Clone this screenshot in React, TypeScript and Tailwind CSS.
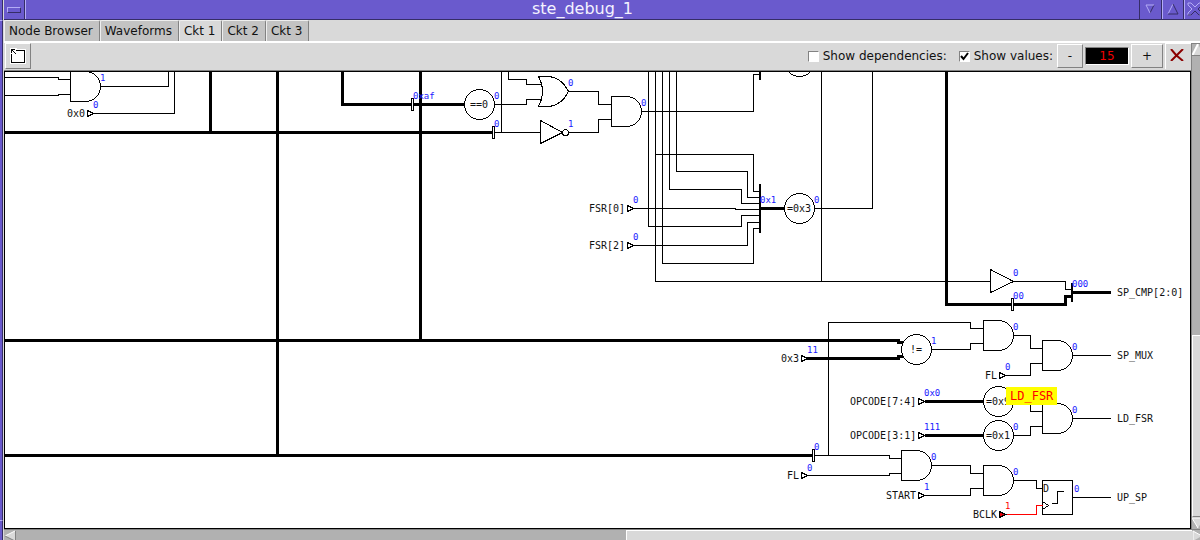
import React, { useState } from "react";

type Pt = { x: number; y: number };

const AndGate = ({ x, y }: Pt) => (
  <path
    d={`M${x} ${y}h15a15 15 0 0 1 0 30h-15z`}
    className="fill-white stroke-black"
  />
);

const Clip = ({ x, y }: Pt) => (
  <rect x={x} y={y - 6} width={2} height={12} className="fill-white stroke-black" />
);

const thin = [
  "M5 77H58V79H70",
  "M5 95H58V94H70",
  "M100 86H168V71",
  "M93 113H174V71",
  "M494 104H526V99H541",
  "M501 71V132",
  "M508 71V79H526V84H541",
  "M568 91H598V104H611",
  "M494 132H540",
  "M568 132H598V119H611",
  "M641 111H753V74H760",
  "M648 71V226H741V215H759",
  "M655 71V281H990",
  "M655 154H753V191H759",
  "M662 71V263H753V228H759",
  "M669 71V189H741V203H759",
  "M676 71V171H747V197H759",
  "M633 208H735V209H759",
  "M633 245H747V222H759",
  "M814 208H872V71",
  "M821 71V281",
  "M1013 281H1065V289H1071",
  "M828 455V322H970V328H983",
  "M931 349H970V343H983",
  "M1013 335H1030V348H1042",
  "M1005 375H1030V363H1042",
  "M1072 355H1110",
  "M1013 401H1030V411H1042",
  "M1013 435H1030V426H1042",
  "M1072 418H1110",
  "M814 455H889V458H901",
  "M807 475H889V473H901",
  "M931 465H970V473H983",
  "M924 495H970V488H983",
  "M1013 480H1036V488H1042",
  "M1072 497H1110",
];

const thick = [
  "M210 71V132",
  "M4 132H492",
  "M277 71V455",
  "M342 71V104H464",
  "M420 71V340",
  "M760 208H784",
  "M946 71V304H1065V296H1071",
  "M1072 292H1110",
  "M4 340H898V342H904",
  "M806 358H898V356H904",
  "M924 401H983",
  "M924 435H983",
  "M4 455H812",
];

const units: [number, number, string][] = [
  [479, 104, "==0"],
  [799, 208, "=0x3"],
  [916, 349, "!="],
  [998, 401, "=0x9"],
  [998, 435, "=0x1"],
];

const ports: [number, number, number, string][] = [
  [87, 113, 67, "0x0"],
  [627, 208, 589, "FSR[0]"],
  [627, 245, 589, "FSR[2]"],
  [801, 358, 781, "0x3"],
  [999, 375, 985, "FL"],
  [918, 401, 850, "OPCODE[7:4]"],
  [918, 435, 850, "OPCODE[3:1]"],
  [801, 475, 787, "FL"],
  [918, 495, 886, "START"],
  [999, 514, 973, "BCLK"],
];

const values: [number, number, string][] = [
  [100, 81, "1"],
  [93, 108, "0"],
  [413, 99, "0xaf"],
  [494, 99, "0"],
  [494, 127, "0"],
  [568, 86, "0"],
  [568, 127, "1"],
  [641, 106, "0"],
  [633, 203, "0"],
  [633, 240, "0"],
  [760, 203, "0x1"],
  [814, 203, "0"],
  [1013, 276, "0"],
  [1013, 299, "00"],
  [1072, 287, "000"],
  [807, 353, "11"],
  [931, 344, "1"],
  [1013, 330, "0"],
  [1072, 350, "0"],
  [1005, 370, "0"],
  [924, 396, "0x0"],
  [924, 430, "111"],
  [1013, 430, "0"],
  [1072, 413, "0"],
  [814, 450, "0"],
  [807, 471, "0"],
  [931, 460, "0"],
  [924, 490, "1"],
  [1013, 475, "0"],
  [1074, 492, "0"],
];

const outputs: [number, string][] = [
  [292, "SP_CMP[2:0]"],
  [355, "SP_MUX"],
  [418, "LD_FSR"],
  [497, "UP_SP"],
];

function Circuit() {
  return (
    <svg
      viewBox="5 72 1185 456"
      width={1185}
      height={456}
      className="block shrink-0 font-['DejaVu_Sans_Mono',monospace]"
      shapeRendering="crispEdges"
      role="img"
      aria-label="Circuit"
    >
      <g transform="translate(.5 .5)" fill="none" strokeLinejoin="miter">
        <path d={thin.join("")} className="stroke-black" strokeLinecap="square" />
        <path d={thick.join("")} className="stroke-black" strokeWidth={3} />
        <g className="fill-black">
          <rect x={758.5} y={70.5} width={2} height={9} />
          <rect x={758.5} y={183.5} width={2} height={49} />
          <rect x={1070.5} y={282.5} width={2} height={19} />
        </g>

        <AndGate x={70} y={71} />
        <AndGate x={611} y={96} />
        <AndGate x={983} y={320} />
        <AndGate x={1042} y={340} />
        <AndGate x={1042} y={403} />
        <AndGate x={901} y={450} />
        <AndGate x={983} y={465} />
        <path
          d="M538 76H548Q561 77 568 91Q561 105 548 106H538Q546 91 538 76Z"
          className="fill-white stroke-black"
        />
        <path d="M540 120V143L562 132Z" className="fill-white stroke-black" />
        <circle cx={565} cy={132} r={3} className="fill-white stroke-black" />
        <path d="M990 269V292L1013 281Z" className="fill-white stroke-black" />

        <Clip x={411} y={104} />
        <Clip x={492} y={132} />
        <Clip x={1011} y={304} />
        <Clip x={812} y={455} />

        <circle cx={799} cy={61} r={15} className="fill-white stroke-black" />
        {units.map(([x, y]) => (
          <circle key={`${x}-${y}`} cx={x} cy={y} r={15} className="fill-white stroke-black" />
        ))}
        {ports.map(([x, y, , name]) => (
          <path
            key={`${x}-${y}`}
            d={`M${x} ${y - 3}v6l6 -3z`}
            className={name === "BCLK" ? "fill-red-600 stroke-black" : "fill-white stroke-black"}
          />
        ))}

        <rect x={1042} y={480} width={30} height={34} className="fill-white stroke-black" />
        <path d="M1042 501L1048 505L1042 509M1051 503H1057V491H1063" className="stroke-black" />
        <path d="M1006 514H1036V505H1042" className="stroke-[#f00]" />
      </g>

      <g className="fill-[#111] text-[10px]">
        {units.map(([x, y, name]) => (
          <text key={`${x}-${y}`} x={x} y={y + 4} textAnchor="middle">
            {name}
          </text>
        ))}
        {ports.map(([x, y, tx, name]) => (
          <text key={`${x}-${y}`} x={tx} y={y + 4}>
            {name}
          </text>
        ))}
        {outputs.map(([y, name]) => (
          <text key={name} x={1117} y={y + 4}>
            {name}
          </text>
        ))}
        <text x={1043} y={492}>
          D
        </text>
      </g>
      <g className="fill-[#1a1aff] text-[9px]">
        {values.map(([x, y, v]) => (
          <text key={`${x}-${y}`} x={x} y={y}>
            {v}
          </text>
        ))}
        <text x={1005} y={509} className="fill-[#f00]">
          1
        </text>
      </g>
    </svg>
  );
}

const tabs = ["Node Browser", "Waveforms", "Ckt 1", "Ckt 2", "Ckt 3"];
const raised = "border border-t-white border-l-white border-r-[#828282] border-b-[#828282]";

export default function App() {
  const [active, setActive] = useState("Ckt 1");
  const [deps, setDeps] = useState(false);
  const [vals, setVals] = useState(true);
  const [level, setLevel] = useState(15);

  return (
    <div className="flex h-screen w-full overflow-hidden bg-[#d9d9d9] font-['DejaVu_Sans',sans-serif] text-[12px] text-[#111]">
      <div className="flex w-1 shrink-0 flex-col border-r border-[#d9d9d9] bg-[#6a5acd]">
        <div className="h-5 border-r border-[#352d66]" />
        <div className="flex-1 border-t border-r border-t-[#b4acf6] border-r-[#352d66]" />
        <div className="h-5 border-t border-r border-t-[#b4acf6] border-r-[#352d66]" />
      </div>

      <div className="flex min-w-0 flex-1 flex-col">
        <header className="flex h-5 shrink-0 border-b border-[#352d66] bg-[#6a5acd]">
          <button
            aria-label="Window menu"
            className="flex w-[22px] items-center justify-center border-r border-r-[#b4acf6]"
          >
            <span className="flex h-full w-full items-center justify-center border-r border-[#352d66]">
              <span className="h-[6px] w-[14px] border border-t-[#b4acf6] border-l-[#b4acf6] border-r-[#352d66] border-b-[#352d66]" />
            </span>
          </button>
          <h1 className="flex-1 text-center text-[16px] leading-[18px] text-[#f4f2ff]">ste_debug_1</h1>
          <button aria-label="Minimize" className="w-[23px] border-x border-l-[#352d66] border-r-[#352d66]">
            <svg width="21" height="19" viewBox="0 0 21 19" fill="none">
              <path d="M14 5L10 13" stroke="#352d66" />
              <path d="M14 5H6L10 13" stroke="#b4acf6" />
            </svg>
          </button>
          <button aria-label="Maximize" className="w-[22px] border-r border-l border-r-[#352d66] border-l-[#b4acf6]">
            <svg width="20" height="19" viewBox="0 0 20 19" fill="none">
              <path d="M10 4L5 14" stroke="#b4acf6" />
              <path d="M10 4L15 14H5" stroke="#352d66" />
            </svg>
          </button>
          <button aria-label="Close" className="w-4 overflow-hidden border-l border-[#b4acf6]">
            <svg width="20" height="19" viewBox="0 0 20 19" fill="none">
              <path d="M3 3H6L10 7L14 3H17V5L13 9L17 13V15H14L10 11L6 15H3V13L7 9L3 5Z" stroke="#b4acf6" />
              <path d="M17 5L13 9L17 13V15H14L10 11L6 15H3" stroke="#352d66" />
            </svg>
          </button>
        </header>

        <nav className="flex h-[21px] shrink-0" role="tablist">
          {tabs.map((t) => (
            <button
              key={t}
              role="tab"
              aria-selected={t === active}
              onClick={() => setActive(t)}
              className={`h-full rounded-t-[2px] border-t border-r border-l border-t-[#eee] border-r-[#828282] border-l-[#eee] pr-1.5 pl-1 leading-[19px] ${
                t === active ? "bg-[#d9d9d9]" : "bg-[#c3c3c3]"
              }`}
            >
              {t}
            </button>
          ))}
        </nav>

        <div className="flex min-h-0 flex-1 border-t-2 border-white">
          <main className="flex min-w-0 flex-1 flex-col">
            <div className="flex h-7 shrink-0 items-center border-b border-[#828282] pb-px">
              <button aria-label="Up one level" className={`ml-px flex h-[26px] w-[26px] items-center justify-center ${raised}`}>
                <svg width="16" height="16" viewBox="0 0 16 16" shapeRendering="crispEdges">
                  <path d="M0 0H7V1H16V16H0Z" fill="#fff" />
                  <rect x="1.5" y="2.5" width="13" height="12" fill="#fff" stroke="#000" />
                  <path d="M0 0H6V4H4V6H0Z" fill="#fff" />
                  <path d="M1.5 5V1.5H5M1.5 1.5L6.5 6.5" fill="none" stroke="#000" />
                </svg>
              </button>
              <div className="flex-1" />
              <label className="mr-3 flex items-center gap-1 leading-4">
                <input type="checkbox" checked={deps} onChange={() => setDeps(!deps)} className="sr-only" />
                <Box on={deps} />
                Show dependencies:
              </label>
              <label className="mr-1 flex items-center gap-1 leading-4">
                <input type="checkbox" checked={vals} onChange={() => setVals(!vals)} className="sr-only" />
                <Box on={vals} />
                Show values:
              </label>
              <button onClick={() => setLevel(level - 1)} className={`h-6 w-[26px] ${raised}`}>
                -
              </button>
              <input
                aria-label="Level"
                readOnly
                value={level}
                className="mx-[2px] h-[18px] w-11 border border-t-[#828282] border-r-white border-b-white border-l-[#828282] bg-black text-center text-[12px] text-[#f00000]"
              />
              <button onClick={() => setLevel(level + 1)} className={`mr-[2px] h-6 w-8 ${raised}`}>
                +
              </button>
              <button aria-label="Close circuit" className="flex h-[26px] w-[26px] items-center justify-center border-t border-l border-white pr-1 pb-1">
                <svg width="14" height="12" viewBox="0 0 14 12" fill="none" stroke="#8b0000">
                  <path d="M1 0L6 6L13 12M13 0L7 6L1 12" strokeWidth="2" />
                </svg>
              </button>
            </div>
            <div className="min-h-0 flex-1 overflow-hidden border border-black bg-white">
              <div className="relative">
                <Circuit />
                <div className="absolute top-[315px] left-[1001px] h-[18px] bg-[#ffff00] px-1 font-['DejaVu_Sans_Mono',monospace] text-[12px] leading-[18px] text-[#ff0000]">
                  LD_FSR
                </div>
              </div>
            </div>
          </main>

          <div className="flex w-[9px] shrink-0 flex-col overflow-hidden border-t border-l border-[#828282] bg-[#b1b1b1]">
            <svg width="16" height="12" viewBox="0 0 16 12" className="shrink-0">
              <path d="M6 0L12 11H0Z" fill="#d9d9d9" />
              <path d="M0.5 11L6 0" stroke="#fff" strokeWidth="2" />
              <path d="M0 11.5H12" stroke="#828282" />
            </svg>
            <div className="flex-[281]" />
            <div className="flex-[181] border-t border-b border-l border-t-white border-b-[#828282] border-l-white bg-[#d9d9d9]" />
            <svg width="16" height="12" viewBox="0 0 16 12" className="shrink-0">
              <path d="M0 1H12L6 11Z" fill="#d9d9d9" />
              <path d="M12 1H0L6 11" stroke="#fff" fill="none" />
            </svg>
          </div>
        </div>

        <div className="flex h-[11px] shrink-0 overflow-hidden border-t border-[#828282] bg-[#b1b1b1]">
          <svg width="12" height="12" viewBox="0 0 12 12" className="shrink-0">
            <path d="M11 1V11L1 6Z" fill="#d9d9d9" />
            <path d="M1 6L11 1" stroke="#fff" />
            <path d="M11.5 1V12M1 6L11 11" stroke="#828282" />
          </svg>
          <div className="flex-[610]" />
          <div className="flex-[565] border-t border-l border-white bg-[#d9d9d9]" />
          <svg width="8" height="12" viewBox="0 0 8 12" className="shrink-0">
            <path d="M1 1L10 6L1 11Z" fill="#d9d9d9" />
            <path d="M1 11V1L10 6" stroke="#fff" fill="none" />
          </svg>
        </div>
      </div>
    </div>
  );
}

function Box({ on }: { on: boolean }) {
  return (
    <span className="flex h-[11px] w-[11px] items-center justify-center border border-t-[#828282] border-r-white border-b-white border-l-[#828282] bg-white">
      {on && (
        <svg width="9" height="9" viewBox="0 0 9 9" fill="none" stroke="#000" strokeWidth="2">
          <path d="M1 4L3.5 7L8 1" />
        </svg>
      )}
    </span>
  );
}
